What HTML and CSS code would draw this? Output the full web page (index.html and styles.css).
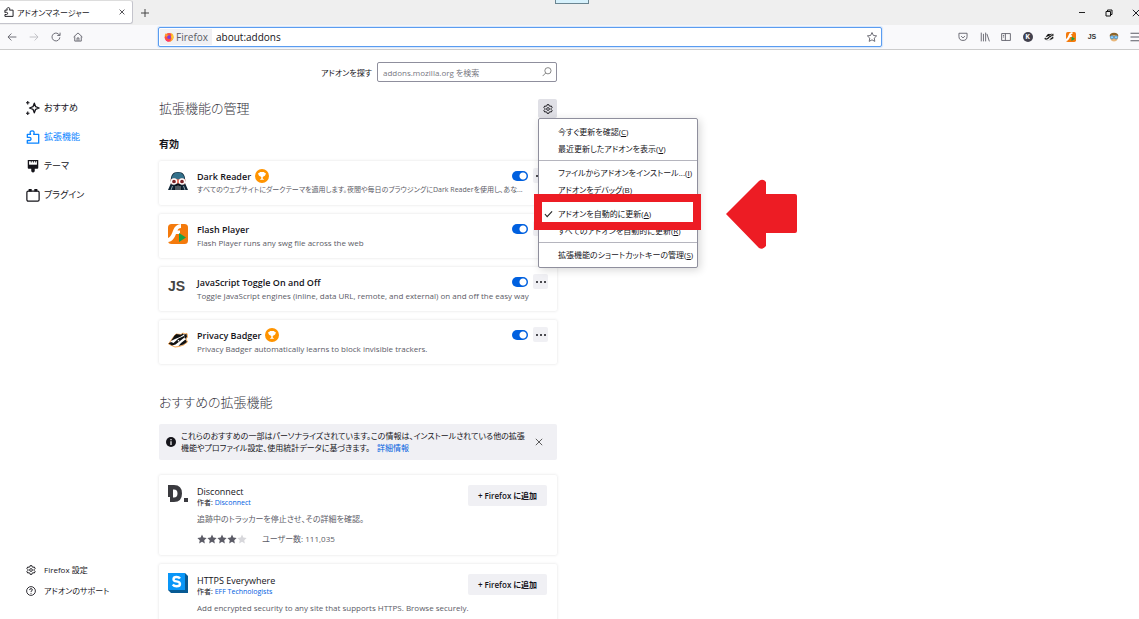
FILE: index.html
```html
<!DOCTYPE html>
<html lang="ja">
<head>
<meta charset="utf-8">
<meta name="viewport" content="width=device-width, initial-scale=1">
<title>アドオンマネージャー</title>
<link rel="stylesheet" href="styles.css">
</head>
<body>
<svg class="defs" aria-hidden="true">
  <symbol id="puzzle" viewBox="0 0 16 16"><path d="M1.500 7.500V5h3.700C4 2.500 5 1 7 1s3 1.500 1.800 4h5.700v10H1.500v-3H4a1.600 1.600 0 0 0 0-3.500H1.500" fill="none" stroke="currentColor" stroke-width="1.500" stroke-linejoin="round" stroke-linecap="round"/></symbol>
  <symbol id="gear" viewBox="0 0 16 16"><path d="M6.600 1h2.800l.5 2 1.300.7 2-.6 1.400 2.400-1.500 1.500v2l1.500 1.500-1.400 2.400-2-.6-1.300.7-.5 2H6.600l-.5-2-1.300-.7-2 .6-1.400-2.400L2.900 9V7L1.400 5.500l1.400-2.400 2 .6L6.100 3z" fill="none" stroke="currentColor" stroke-width="1.500" stroke-linejoin="round"/><circle cx="8" cy="8" r="2.200" fill="none" stroke="currentColor" stroke-width="1.400"/></symbol>
  <symbol id="cross" viewBox="0 0 10 10"><path d="M1 1l8 8M9 1L1 9" fill="none" stroke="currentColor" stroke-width="1.200"/></symbol>
  <symbol id="trophy" viewBox="0 0 14 14"><circle cx="7" cy="7" r="7" fill="#ff9400"/><path d="M4.600 3h4.800v1h1.400c0 2-.8 3-2 3.200L7.700 8.200v1.300l1.600 1.300H4.700l1.600-1.300V8.200L5.200 7.200C4 7 3.200 6 3.200 4h1.400z" fill="#fff"/></symbol>
  <symbol id="star" viewBox="0 0 16 16"><path d="M8 .8l2.200 4.700 5.200.7-3.800 3.600.9 5.200L8 12.500 3.500 15l.9-5.200L.6 6.200l5.200-.7z"/></symbol>
  <symbol id="flash" viewBox="0 0 20 20"><rect width="20" height="20" rx="3.500" fill="#f47a0c"/><path d="M0 14C3 13 4 9 5.500 5.500 7 2 9 .5 13 0v4c-2 0-3 1-3.500 2.500H12V10H8C6.500 14 4 18 0 18z" fill="#fff"/><path d="M11 9l7 4.500-7 4.500z" fill="#18a34a"/></symbol>
  <symbol id="vader" viewBox="0 0 20 20"><path d="M3 12C2 4 5 1 10 1s8 3 7 11l3 7H0z" fill="#0f2536"/><path d="M3.500 8C4 3 7 1.500 10 1.500S16 3 16.500 8L10 9z" fill="#34718b"/><path d="M2.500 8.500q3.500-2 7.500 0 4-2 7.500 0l-1 5-6.500-1-6.500 1z" fill="#e87561"/><circle cx="6" cy="10.500" r="2.500" fill="#7c2428" stroke="#fff" stroke-width="1.300"/><circle cx="14" cy="10.500" r="2.500" fill="#7c2428" stroke="#fff" stroke-width="1.300"/><path d="M6 19l1-5 3-1.500 3 1.500 1 5z" fill="#0c131b"/><path d="M8 15v4M10 14.500V19M12 15v4M3 19l1.500-4M17 19l-1.500-4" stroke="#b7c6ce" stroke-width=".8"/></symbol>
  <symbol id="badger" viewBox="0 0 20 16"><path d="M.5 12L5 5.500 8 2l5 .5L15 1l2 1 2-.5.500 3.500-1.500 2 1.500 3-4 3-4.500 1.500L7 15z" fill="#fff" stroke="#f39a3d" stroke-width=".9"/><path d="M3 9l3.500-5.500L8.500 2l4.500.700 1.500-1.200 1.500 1-4 2.500-5 2z" fill="#111"/><path d="M.5 11.500L3 10l2.500 1 5-4.500L16 4l1 1-5 4-4.500 3.500L4 13.500z" fill="#111"/><path d="M16 2.500l2.500-.5.500 3-2 2zM13 11l4.500-3.500L19 10l-3.500 2.500-5 1.500z" fill="#111"/><circle cx="10.500" cy="8.700" r=".8" fill="#fff"/></symbol>
</svg>
<div class="app">
  <header class="tabstrip">
    <div class="tab"><svg class="i10"><use href="#puzzle"/></svg><span class="tab-title">アドオンマネージャー</span><button class="plain tab-close" aria-label="タブを閉じる"><svg class="i6"><use href="#cross"/></svg></button></div>
    <button class="plain newtab" aria-label="新しいタブ"><svg class="i8" viewBox="0 0 8 8"><path d="M4 0v8M0 4h8" stroke="currentColor"/></svg></button>
    <span class="grip"></span>
    <div class="winctl">
      <button class="plain" aria-label="最小化"><svg class="i8" viewBox="0 0 8 8"><path d="M1 3.500h6" stroke="#222"/></svg></button>
      <button class="plain" aria-label="元に戻す"><svg class="i8" viewBox="0 0 8 8"><path d="M1 2.500h4.500V7H1zM2.500 2.500V1H7v4.500H5.500" fill="none" stroke="#111"/></svg></button>
      <button class="plain" aria-label="閉じる"><svg class="i8"><use href="#cross"/></svg></button>
    </div>
  </header>
  <div class="toolbar">
    <nav class="nav" aria-label="ナビゲーション">
      <button class="plain" aria-label="戻る"><svg class="i10" viewBox="0 0 16 16"><path d="M15 8H2M7 2.500L1.500 8 7 13.500" class="ln"/></svg></button>
      <button class="plain dim" aria-label="進む"><svg class="i10" viewBox="0 0 16 16"><path d="M1 8h13M9 2.500L14.500 8 9 13.500" class="ln"/></svg></button>
      <button class="plain" aria-label="再読み込み"><svg class="i10" viewBox="0 0 16 16"><path d="M14.200 8.500A6.300 6.300 0 1 1 12 3.200l2 2M14.500 1v4.500H10" class="ln"/></svg></button>
      <button class="plain" aria-label="ホーム"><svg class="i10" viewBox="0 0 16 16"><path d="M1 8l7-6.500L15 8M2.800 7v7.500h10.400V7M6.500 14V9.500h3V14" class="ln"/></svg></button>
    </nav>
    <div class="urlbar">
      <span class="identity"><svg class="i10" viewBox="0 0 16 16"><circle cx="8" cy="8.500" r="7" fill="#ff4f3c"/><path d="M11 1c4 2 5 5 4 9-1 3-4 5.500-7 5.500 4-2 5-5 3-8 1-2 1-4 0-6.500z" fill="#ffc72e"/><path d="M1 6C2 4 2 3 3 2c1 2 3 2 5 3l-3 3z" fill="#ff9b28"/><circle cx="8" cy="8" r="3" fill="#7a3ce0"/><path d="M2 10c1 3 5 5 9 2-3 5-8 3.500-9-2z" fill="#ff2d7c"/></svg>Firefox</span>
      <input class="url" aria-label="アドレス" value="about:addons">
      <button class="plain" aria-label="ブックマーク"><svg class="i10 outline"><use href="#star"/></svg></button>
    </div>
    <div class="exts">
      <button class="plain" aria-label="Pocket"><svg class="i10" viewBox="0 0 16 16"><path d="M1.500 2h13v5a6.500 6.500 0 0 1-13 0zM5 6.500l3 3 3-3" class="ln"/></svg></button>
      <button class="plain" aria-label="ライブラリ"><svg class="i10" viewBox="0 0 16 16"><path d="M2 1v14M5.500 3v12M9 1v14M11 3l4 12" class="ln"/></svg></button>
      <button class="plain" aria-label="サイドバー"><svg class="i10" viewBox="0 0 16 16"><path d="M1 2.500h14v11H1zM7 2.500v11M3 5.500h2M3 8h2" class="ln"/></svg></button>
      <button class="plain" aria-label="アカウント"><span class="account">K</span></button>
      <button class="plain" aria-label="Privacy Badger"><svg class="i10 gray"><use href="#badger"/></svg></button>
      <button class="plain" aria-label="Flash Player"><svg class="i10"><use href="#flash"/></svg></button>
      <button class="plain js-mini" aria-label="JavaScript Toggle">JS</button>
      <button class="plain" aria-label="リーダー"><svg class="i10" viewBox="0 0 16 16"><path d="M2 7q0-5 6-5t6 5v4q-2 4-6 4t-6-4z" fill="#e9b77b"/><path d="M1 7q0-6 7-6t7 6l-3-2H5z" fill="#8a642a"/><circle cx="4.800" cy="8.500" r="2.600" fill="#8fd2ff" stroke="#2376b8"/><circle cx="11.200" cy="8.500" r="2.600" fill="#8fd2ff" stroke="#2376b8"/></svg></button>
      <button class="plain" aria-label="メニュー"><svg class="i12" viewBox="0 0 16 16"><path d="M2 3h14M2 8h14M2 13h14" class="ln"/></svg></button>
    </div>
  </div>
  <div class="page">
    <aside class="sidebar">
      <nav class="cats" aria-label="カテゴリー">
        <a href="#rec"><svg class="i14" viewBox="0 0 16 16"><path d="M9.500 2.500L11 6.500l4 1.500-4 1.500-1.500 4L8 9.500 4 8l4-1.500z" fill="none" stroke="currentColor" stroke-width="1.500" stroke-linejoin="round"/><path d="M2 0v4M0 2h4M2 12v4M0 14h4" stroke="currentColor" stroke-width="1.300"/></svg>おすすめ</a>
        <a href="#ext" class="current" aria-current="page"><svg class="i14"><use href="#puzzle"/></svg>拡張機能</a>
        <a href="#theme"><svg class="i14" viewBox="0 0 16 16"><path d="M2 1h12v9q0 1-1 1h-3v3q-2 3-4 0v-3H3q-1 0-1-1z" fill="currentColor"/><path d="M3.500 2.500h9v4h-9z" fill="#fff"/><path d="M6 2v2M8.500 2v2M11 2v2" stroke="currentColor"/></svg>テーマ</a>
        <a href="#plugin"><svg class="i14" viewBox="0 0 16 16"><rect x="1" y="3.500" width="14" height="11.500" rx="1.500" fill="none" stroke="currentColor" stroke-width="1.400"/><path d="M3 1h3.500v3H3zM9.500 1H13v3H9.500z" fill="currentColor"/></svg>プラグイン</a>
      </nav>
      <nav class="foot" aria-label="設定とサポート">
        <a href="#prefs"><svg class="i10"><use href="#gear"/></svg>Firefox 設定</a>
        <a href="#help"><svg class="i10" viewBox="0 0 16 16"><circle cx="8" cy="8" r="7" class="ln"/><path d="M5.800 6.500q0-2.300 2.200-2.300t2.200 2Q10.200 7.500 8 8.500v1M8 11v1.500" class="ln"/></svg>アドオンのサポート</a>
      </nav>
    </aside>
    <main class="main">
      <form class="search"><label for="q">アドオンを探す</label><span class="searchbox"><input id="q" placeholder="addons.mozilla.org を検索"><svg class="i10" viewBox="0 0 16 16"><circle cx="9.500" cy="6" r="5" class="ln"/><path d="M6 9.500l-5 5" class="ln"/></svg></span></form>
      <div class="heading">
        <h1>拡張機能の管理</h1>
        <div class="tools">
          <button class="gearbtn" aria-label="アドオンツール" aria-expanded="true"><svg class="i10"><use href="#gear"/></svg></button>
          <div class="menu" role="menu">
            <button role="menuitem">今すぐ更新を確認(<u>C</u>)</button>
            <button role="menuitem">最近更新したアドオンを表示(<u>V</u>)</button>
            <hr>
            <button role="menuitem">ファイルからアドオンをインストール...(<u>I</u>)</button>
            <button role="menuitem">アドオンをデバッグ(<u>B</u>)</button>
            <hr>
            <div class="marked">
              <button role="menuitemcheckbox" aria-checked="true"><svg class="check" viewBox="0 0 10 8"><path d="M1 4l2.500 3L9 1" fill="none" stroke="#222" stroke-width="1.200"/></svg>アドオンを自動的に更新(<u>A</u>)</button>
              <span class="frame"></span>
              <svg class="arrow" viewBox="0 0 71 70" aria-hidden="true"><path d="M0 35L33 2Q37-1 40 3V15H69Q71 15 71 17V52Q71 54 69 54H40V67Q37 71 33 69Z" fill="#ed1c24"/></svg>
            </div>
            <button role="menuitem">すべてのアドオンを自動的に更新(<u>R</u>)</button>
            <hr>
            <button role="menuitem">拡張機能のショートカットキーの管理(<u>S</u>)</button>
          </div>
        </div>
      </div>
      <h2>有効</h2>
      <section class="list" aria-label="有効">
        <article class="card addon"><svg class="i20"><use href="#vader"/></svg><div class="info"><h3>Dark Reader<svg class="i14"><use href="#trophy"/></svg></h3><p class="long">すべてのウェブサイトにダークテーマを適用します。夜間や毎日のブラウジングにDark Readerを使用し、あな...</p></div><div class="actions"><input type="checkbox" class="toggle" aria-label="Dark Reader" checked><button class="more" aria-label="その他"><i></i><i></i><i></i></button></div></article>
        <article class="card addon"><svg class="i20"><use href="#flash"/></svg><div class="info"><h3>Flash Player</h3><p>Flash Player runs any swg file across the web</p></div><div class="actions"><input type="checkbox" class="toggle" aria-label="Flash Player" checked><button class="more" aria-label="その他"><i></i><i></i><i></i></button></div></article>
        <article class="card addon"><span class="js">JS</span><div class="info"><h3>JavaScript Toggle On and Off</h3><p>Toggle JavaScript engines (inline, data URL, remote, and external) on and off the easy way</p></div><div class="actions"><input type="checkbox" class="toggle" aria-label="JavaScript Toggle On and Off" checked><button class="more" aria-label="その他"><i></i><i></i><i></i></button></div></article>
        <article class="card addon"><svg class="i20"><use href="#badger"/></svg><div class="info"><h3>Privacy Badger<svg class="i14"><use href="#trophy"/></svg></h3><p>Privacy Badger automatically learns to block invisible trackers.</p></div><div class="actions"><input type="checkbox" class="toggle" aria-label="Privacy Badger" checked><button class="more" aria-label="その他"><i></i><i></i><i></i></button></div></article>
      </section>
      <h1 class="rec-title">おすすめの拡張機能</h1>
      <div class="notice"><svg class="i10" viewBox="0 0 10 10"><circle cx="5" cy="5" r="5" fill="#15141a"/><path d="M5 2v1.200M5 4.200V8" stroke="#fff" stroke-width="1.200"/></svg><p>これらのおすすめの一部はパーソナライズされています。この情報は、インストールされている他の拡張<br>機能やプロファイル設定、使用統計データに基づきます。<a href="#more">詳細情報</a></p><button class="plain" aria-label="閉じる"><svg class="i8"><use href="#cross"/></svg></button></div>
      <section class="recs" aria-label="おすすめの拡張機能">
        <article class="card rec"><svg class="i20" viewBox="0 0 20 20"><path d="M0 1h6q8 0 8 8.500T6 18H2v-5H0zM5 5.500v8h1q3.500 0 3.500-4t-3.500-4z" fill="#3a3a3f" fill-rule="evenodd"/><path d="M16 14h4v4h-4z" fill="#3a3a3f"/></svg><div class="info"><h3>Disconnect</h3><p class="by">作者: <a href="#d">Disconnect</a></p><p class="desc">追跡中のトラッカーを停止させ、その詳細を確認。</p><div class="stats"><span class="stars" role="img" aria-label="4 / 5"><svg><use href="#star"/></svg><svg><use href="#star"/></svg><svg><use href="#star"/></svg><svg><use href="#star"/></svg><svg class="off"><use href="#star"/></svg></span><span>ユーザー数: 111,035</span></div></div><button class="add">+ Firefox に追加</button></article>
        <article class="card rec"><svg class="i20" viewBox="0 0 20 20"><path d="M0 0h17l3 3v17H3l-3-3z" fill="#075a94"/><path d="M0 0h17v17H0z" fill="#0996f8"/><path d="M12 5.500Q11 4 8.500 4 5.500 4 5.500 6.200 5.500 8 8.500 8.400 12 9 12 11 12 13.300 8.500 13.300 6 13.300 4.800 11.500" fill="none" stroke="#fff" stroke-width="2.400"/></svg><div class="info"><h3>HTTPS Everywhere</h3><p class="by">作者: <a href="#e">EFF Technologists</a></p><p class="desc">Add encrypted security to any site that supports HTTPS. Browse securely.</p></div><button class="add">+ Firefox に追加</button></article>
      </section>
    </main>
  </div>
</div>
</body>
</html>
```
FILE: styles.css
```css
* { box-sizing: border-box; }
body, h1, h2, h3, p { margin: 0; }
body {
  font: 8px/13px "Open Sans", "Noto Sans CJK JP", sans-serif;
  font-feature-settings: "palt";
  color: #15141a;
  background: #fff;
}
button, input { font: inherit; color: inherit; font-feature-settings: inherit; }
a { color: #0060df; text-decoration: none; }
svg { display: block; flex: none; }
.defs { position: absolute; width: 0; height: 0; }
.i6 { width: 6px; height: 6px; }
.i8 { width: 8px; height: 8px; }
.i10 { width: 10px; height: 10px; }
.i12 { width: 12px; height: 12px; }
.i14 { width: 14px; height: 14px; }
.i20 { width: 20px; height: 20px; }
.ln { fill: none; stroke: currentColor; stroke-width: 1.4; }
.plain {
  display: flex; align-items: center; justify-content: center;
  padding: 0; border: 0; background: none;
}
.app { display: flex; flex-direction: column; height: 100vh; overflow: hidden; }

/* Tabs */
.tabstrip { position: relative; display: flex; flex: none; height: 25px; background: #efefef; }
.tab {
  display: flex; align-items: center; gap: 3px;
  width: 133px; height: 24px; padding: 0 7px 0 4px;
  background: #fff; border: 1px solid #c4c4cc; border-left: 0; border-top-color: #ddd; border-radius: 0 3px 3px 0;
}
.tab-title { flex: 1; white-space: nowrap; }
.newtab { margin-left: 8px; color: #444; }
.grip {
  position: absolute; top: 0; left: 50%; width: 34px; height: 4px; margin-left: -15px;
  background: #d6f1fc; border: 1px solid #6b8591; border-top: 0;
}
.winctl { display: flex; gap: 19px; margin-left: auto; margin-right: -1px; }

/* Toolbar */
.toolbar { display: flex; flex: none; align-items: center; height: 25px; background: #f9f9fb; border-bottom: 1px solid #ccc; color: #5b5b66; }
.nav { display: flex; gap: 12px; padding-left: 7px; }
.dim { opacity: .4; }
.urlbar {
  display: flex; flex: 1; align-items: center;
  height: 20px; margin: 0 75px; padding: 1px 4px 1px 1px;
  background: #fff; border: 1px solid #5a9cf0; border-radius: 2px; box-shadow: 0 0 1px 1px #d5e5fa;
}
.identity { display: flex; align-items: center; gap: 2px; height: 16px; padding: 0 4px; background: #f0f0f4; font-size: 10px; }
.url { flex: 1; min-width: 0; border: 0; padding: 0 4px; background: none; outline: 0; font-size: 10px; color: #15141a; }
.outline { fill: none; stroke: currentColor; stroke-width: 1.4; }
.exts { display: flex; justify-content: space-between; width: 184px; margin-right: -2px; }
.exts button { width: 12px; }
.account { width: 10px; height: 10px; border-radius: 50%; background: #42414d; color: #fff; font-size: 7px; line-height: 10px; font-weight: 700; }
.gray { filter: grayscale(1); }
.exts .js-mini { font: 700 7px/10px "Liberation Sans", sans-serif; color: #333; }

/* Page */
.page { display: flex; flex: 1; min-height: 0; }
.sidebar { display: flex; flex: none; flex-direction: column; justify-content: space-between; width: 159px; padding: 43px 0 18px 26px; }
.sidebar a { display: flex; align-items: center; color: inherit; }
.sidebar .cats a { height: 29px; gap: 4px; font-size: 9px; }
.sidebar .cats .current { color: #0a84ff; }
.foot a { height: 21px; gap: 8px; }
.main { flex: 0 1 398px; min-width: 0; padding-top: 12px; }
.search { display: flex; align-items: center; justify-content: flex-end; gap: 5px; }
.searchbox { display: flex; align-items: center; width: 180px; height: 20px; padding: 0 4px 0 5px; border: 1px solid #8f8f9d; border-radius: 2px; color: #777; }
.searchbox input { flex: 1; min-width: 0; padding: 0; border: 0; outline: 0; background: none; }
.searchbox input::placeholder { color: #77777f; }
.heading { display: flex; align-items: center; justify-content: space-between; margin-top: 17px; }
h1 { font-size: 13px; line-height: 19px; font-weight: 300; color: #38373f; }
h2 { margin-top: 19px; font-size: 10px; line-height: 15px; }
.tools { position: relative; }
.gearbtn { display: flex; align-items: center; justify-content: center; width: 19px; height: 19px; padding: 0; border: 0; border-radius: 2px; background: #e0e0e6; }

/* Tools menu */
.menu {
  position: absolute; z-index: 2; top: 100%; left: 0; width: 160px; padding: 4px 0;
  background: #fff; border: 1px solid #8f8f9d; border-radius: 2px; box-shadow: 2px 2px 8px rgba(0, 0, 0, .16);
}
.menu button {
  position: relative; display: block; width: 100%; height: 17px; padding: 0 0 0 19px;
  border: 0; background: none; text-align: left; white-space: nowrap;
}
.menu hr { height: 1px; margin: 3px 0; border: 0; background: #b5b5be; }
.marked { position: relative; z-index: 1; }
.check { position: absolute; left: 5px; top: 5px; width: 9px; height: 8px; }
.frame { position: absolute; inset: -11px -4px -8px -5px; border: 8px solid #ed1c24; pointer-events: none; }
.arrow { position: absolute; top: -26px; left: 187px; width: 71px; height: 70px; }

/* Add-on cards */
.card { display: flex; background: #fff; border-radius: 2px; box-shadow: 0 0 3px rgba(58, 57, 68, .16); }
.list { display: grid; grid-template-columns: minmax(0, 1fr); gap: 9px; margin-top: 9px; }
.addon { height: 44px; padding: 8px 9px 0; gap: 9px; position: relative; }
.addon > svg, .js { margin-top: 2px; }
.js { width: 20px; font: 700 14px/18px "Liberation Sans", sans-serif; color: #444; }
.info { flex: 1; min-width: 0; }
h3 { display: flex; align-items: center; gap: 4px; height: 14px; font-size: 9px; font-weight: 600; }
.info p { color: #5b5b66; white-space: nowrap; }
.info .long { font-size: 7px; }
.actions { display: flex; align-items: center; gap: 5px; height: 15px; position: absolute; right: 9px; top: 7px; }
.toggle { appearance: none; width: 16px; height: 10px; margin: 0; border-radius: 5px; background: radial-gradient(circle at 11px 5px, #fff 3px, #0060df 4px); }
.more { display: flex; align-items: center; justify-content: center; gap: 2px; width: 15px; height: 15px; padding: 0; border: 0; border-radius: 2px; background: #f0f0f4; }
.more i { width: 2px; height: 2px; border-radius: 50%; background: #15141a; }

/* Recommendations */
.rec-title { margin-top: 29px; }
.notice { display: flex; align-items: center; gap: 5px; min-height: 36px; margin-top: 12px; padding: 0 14px 0 7px; background: #f0f0f4; border-radius: 2px; }
.notice p { flex: 1; line-height: 12px; white-space: nowrap; }
.notice a { margin-left: 7px; }
.notice button { color: #555; }
.recs { display: grid; grid-template-columns: minmax(0, 1fr); gap: 9px; margin-top: 15px; }
.rec { position: relative; min-height: 80px; padding: 9px 9px 10px; gap: 9px; }
.rec h3 { font-weight: 400; height: 14px; }
.info .by { font-size: 7px; line-height: 10px; color: #15141a; }
.info .desc { margin-top: 4px; }
.stats { display: flex; align-items: center; gap: 15px; margin-top: 7px; color: #5b5b66; }
.stars { display: flex; }
.stars svg { width: 10px; height: 10px; fill: #5b5b66; }
.stars .off { fill: #d7d7db; }
.add { position: absolute; right: 10px; top: 10px; width: 79px; height: 21px; padding: 0; border: 0; border-radius: 2px; background: #f0f0f4; font-weight: 600; }
```
